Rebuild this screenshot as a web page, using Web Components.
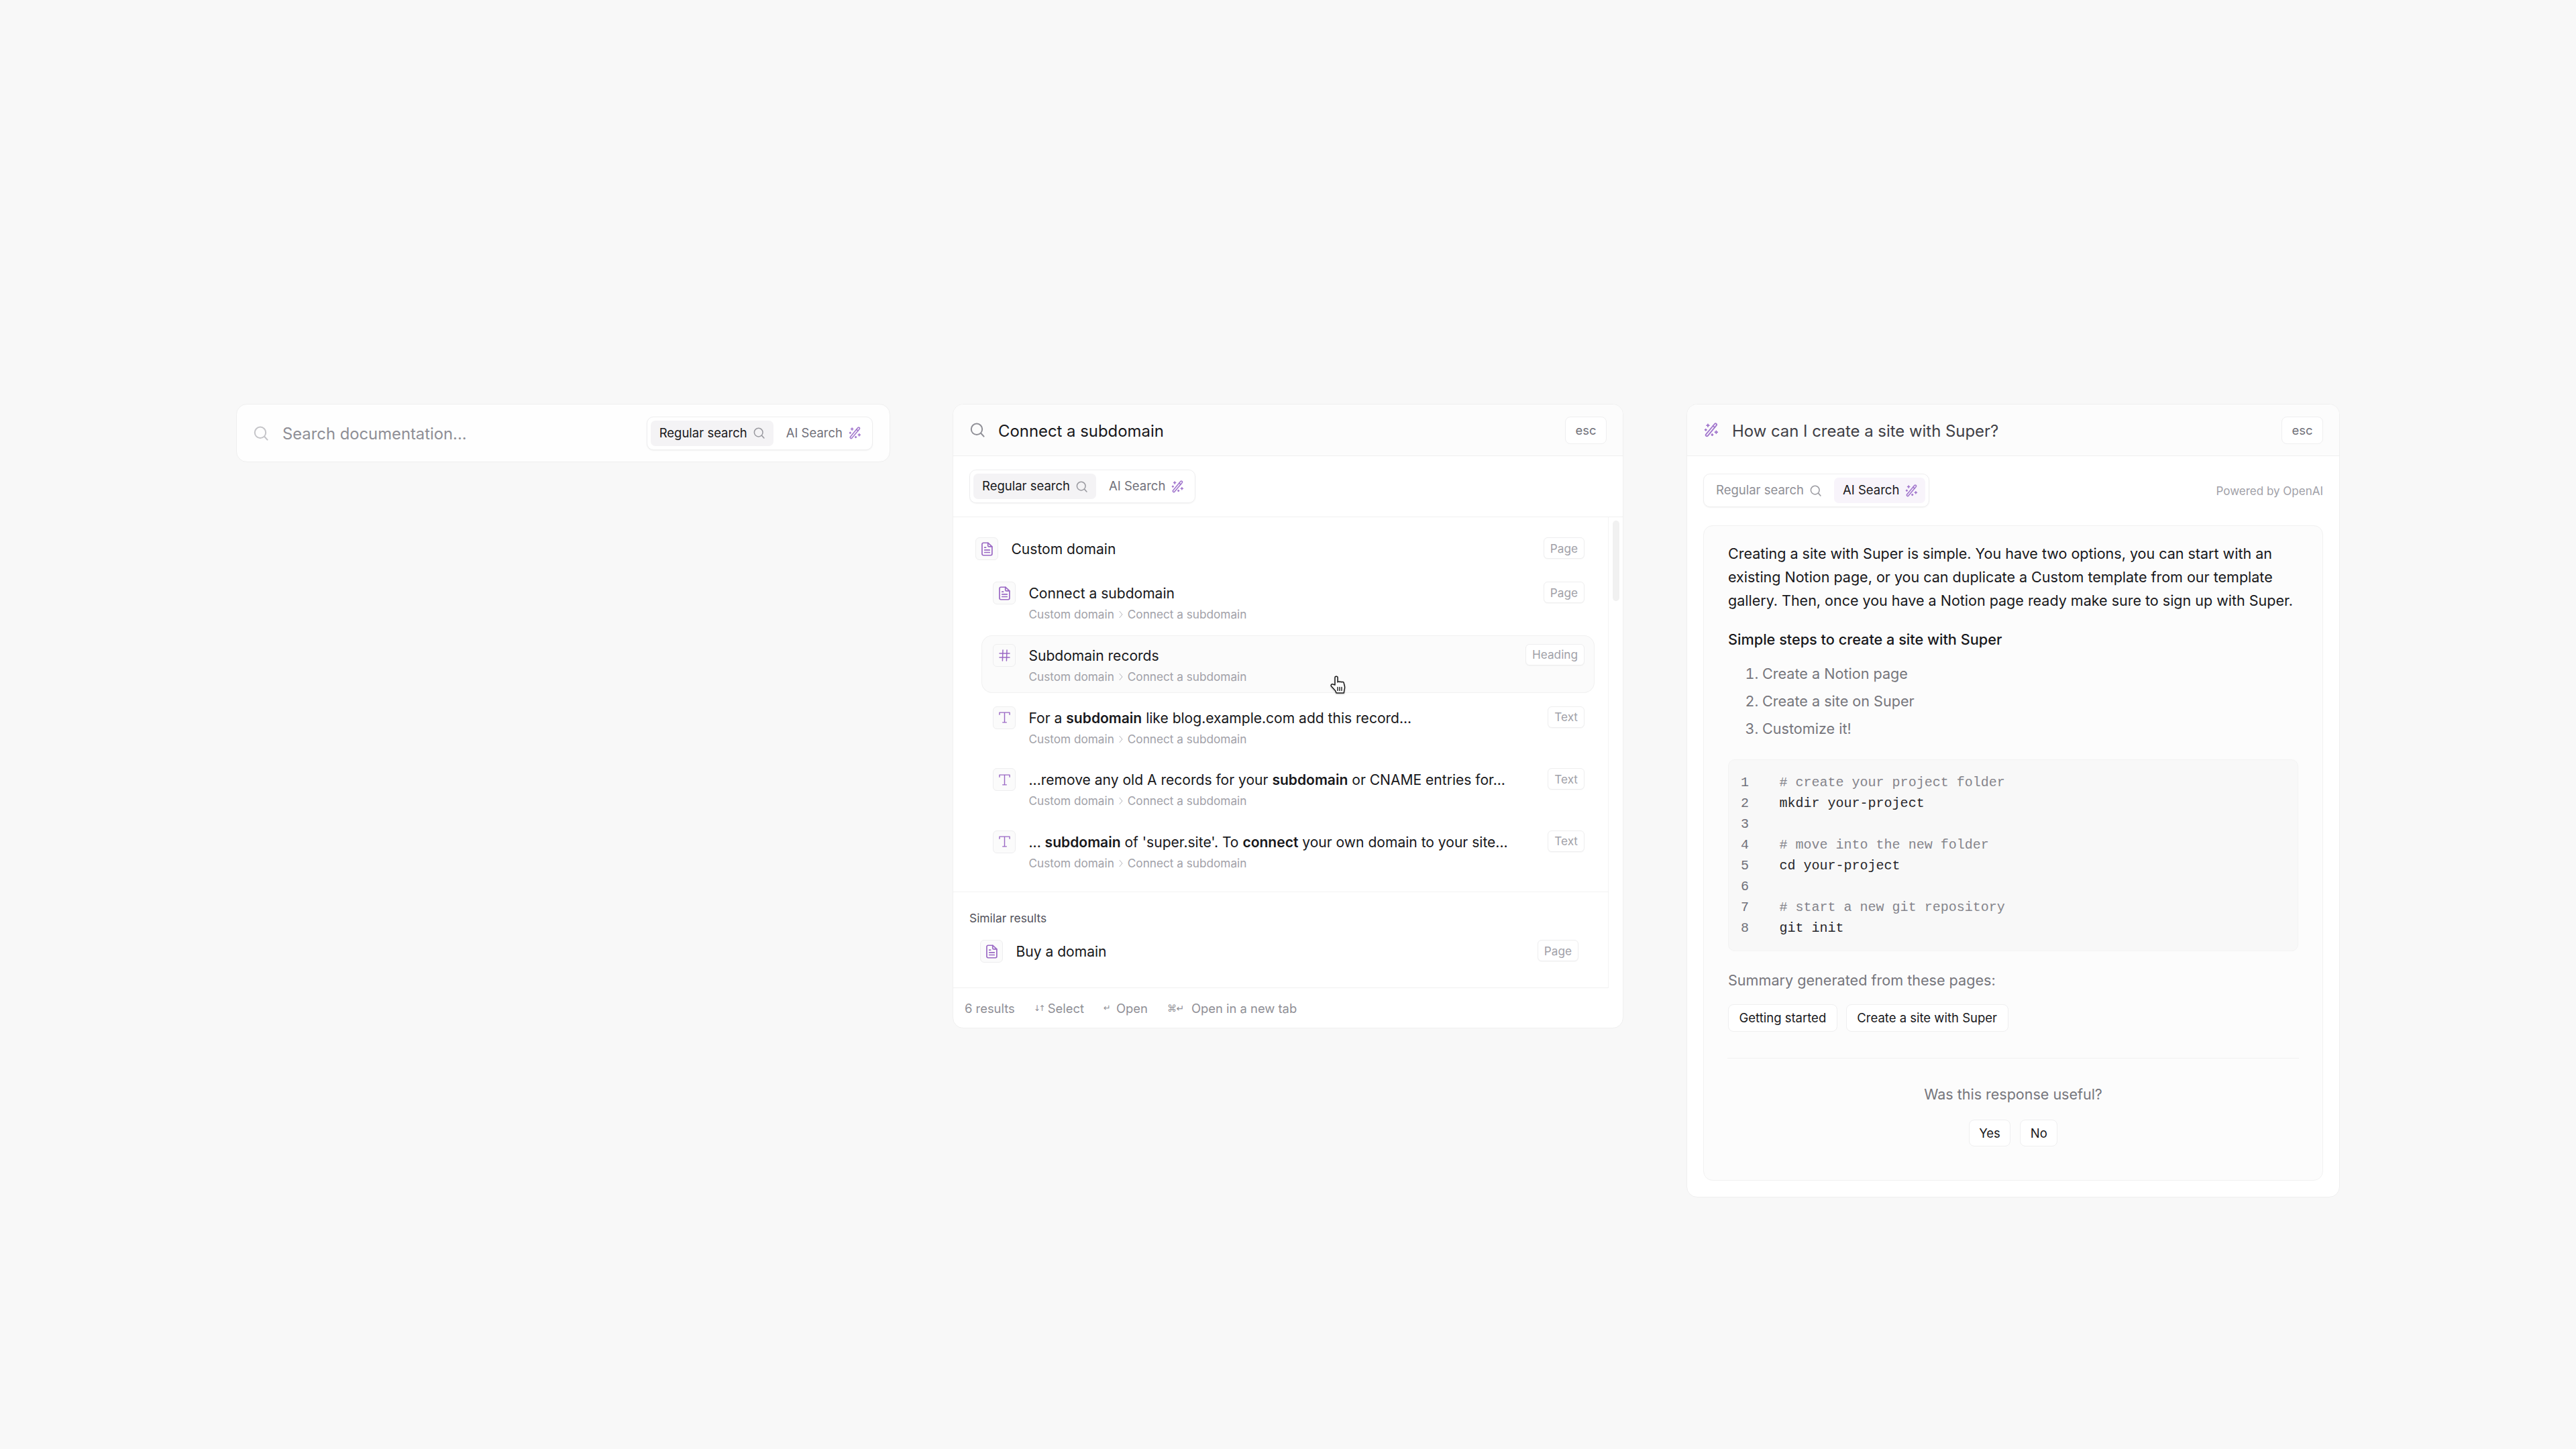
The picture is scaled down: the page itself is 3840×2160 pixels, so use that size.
<!DOCTYPE html>
<html lang="en">
<head>
<meta charset="utf-8">
<title>Super search</title>
<style>
  html, body { margin: 0; background: #f8f8f8; }
  body { font-family: Inter, "Liberation Sans", sans-serif; color: #18181b; min-height: 2160px; }
</style>
</head>
<body>
<search-page>
  <search-closed></search-closed>

  <search-panel>
    <search-header icon="search" slot="header">Connect a subdomain</search-header>
    <div slot="tabs" style="height:90px;display:flex;align-items:center;padding-left:24px;">
      <search-tabs active="regular"></search-tabs>
    </div>
    <result-list>
      <result-row icon="page" tag="Page">Custom domain</result-row>
      <result-row icon="page" tag="Page" crumbs indent>Connect a subdomain</result-row>
      <result-row icon="hash" tag="Heading" crumbs indent hover>Subdomain records</result-row>
      <result-row icon="text" tag="Text" crumbs indent>For a <b>subdomain</b> like blog.example.com add this record...</result-row>
      <result-row icon="text" tag="Text" crumbs indent>...remove any old A records for your <b>subdomain</b> or CNAME entries for...</result-row>
      <result-row icon="text" tag="Text" crumbs indent>... <b>subdomain</b> of 'super.site'. To <b>connect</b> your own domain to your site...</result-row>
    </result-list>
    <similar-results>
      <result-row icon="page" tag="Page">Buy a domain</result-row>
    </similar-results>
    <search-footer></search-footer>
    <hand-cursor></hand-cursor>
  </search-panel>

  <search-panel wide>
    <search-header icon="wand" slot="header">How can I create a site with Super?</search-header>
    <ai-answer>
      <p>Creating a site with Super is simple. You have two options, you can start with an existing Notion page, or you can duplicate a Custom template from our template gallery. Then, once you have a Notion page ready make sure to sign up with Super.</p>
      <h4>Simple steps to create a site with Super</h4>
      <ol>
        <li>Create a Notion page</li>
        <li>Create a site on Super</li>
        <li>Customize it!</li>
      </ol>
    </ai-answer>
  </search-panel>
</search-page>

<script>
// icons used all over the place
const ICONS = {
  search: `<svg viewBox="0 0 22 22" fill="none" stroke="currentColor" stroke-width="2" stroke-linecap="round"><circle cx="10" cy="9.8" r="8.200"/><path d="M16.400 16 20.600 20.600"/></svg>`,
  wand: `<svg viewBox="0 0 24 24" fill="none" stroke="currentColor" stroke-width="2" stroke-linecap="round" stroke-linejoin="round"><path d="M3.200 19.200 17.600 1.900a1.900 1.900 0 0 1 2.900 2.400L6.100 21.600a1.900 1.900 0 0 1-2.900-2.400Z"/><path d="M14.700 5.300 17.700 7.800"/><path d="M6.500 2.500v4M4.500 4.500h4M3 10.500v2.400M1.800 11.700h2.400M20 13.500v4M18 15.500h4M13.500 18.500v2.400M12.300 19.700h2.400"/></svg>`,
  page: `<svg viewBox="0 0 18 22" fill="none" stroke="currentColor" stroke-width="1.800" stroke-linecap="round" stroke-linejoin="round"><path d="M3 1.200h7.500l6.300 6v11.600a2 2 0 0 1-2 2H3a2 2 0 0 1-2-2V3.200a2 2 0 0 1 2-2Z"/><path d="M10.300 1.400v4.300a1.500 1.500 0 0 0 1.500 1.500h4.800"/><path d="M5 8.500h2M5 12.500h8M5 16.300h8"/></svg>`,
  hash: `<svg viewBox="0 0 17 18" fill="none" stroke="currentColor" stroke-width="1.500" stroke-linecap="round"><path d="M1 6h15M1 12h15M6 1 5.400 17M12 1l-.6 16"/></svg>`,
  text: `<svg viewBox="0 0 18 18" fill="none" stroke="currentColor" stroke-width="1.500" stroke-linecap="round" stroke-linejoin="round"><path d="M1 4.500V1.200h16v3.300M9 1.200v15.600M6 16.800h6"/></svg>`
};

class SearchPage extends HTMLElement {
  constructor() {
    super();
    this.attachShadow({ mode: "open" });
    this.shadowRoot.innerHTML = `
      <style>
        :host { display: flex; align-items: flex-start; gap: 93px; padding: 602px 0 0 352px; }
      </style>
      <slot></slot>`;
  }
}

// the little rounded pill with two choices
class SearchTabs extends HTMLElement {
  constructor() {
    super();
    this.attachShadow({ mode: "open" });
    const active = this.getAttribute("active");
    this.shadowRoot.innerHTML = `
      <style>
        :host { display: inline-flex; gap: 6px; padding: 5px; height: 38px; border: 1px solid #eeeeef; border-radius: 10px;
                background: #fff; box-shadow: 0 1px 2px rgba(0,0,0,.05); font-size: 18.5px; color: #71717a; }
        span.tab { display: flex; align-items: center; gap: 9px; padding: 0 13px 2px; border-radius: 7px; white-space: nowrap; }
        span.ai { padding: 0 11px 2px 13px; }
        .on { color: #18181b; }
        .regular.on { background: #f4f3f5; }
        .ai.on { background: #f8f4fb; }
        svg { display: block; margin-top: 2px; }
        .regular svg { width: 17px; height: 17px; color: #9a9aa0; }
        .ai svg { width: 19px; height: 19px; color: #a277cd; }
        .regular:not(.on) { color: #8f8f96; }
      </style>
      <span class="tab regular ${active == "regular" ? "on" : ""}">Regular search ${ICONS.search}</span>
      <span class="tab ai ${active == "ai" ? "on" : ""}">AI Search ${ICONS.wand}</span>`;
  }
}

class SearchClosed extends HTMLElement {
  constructor() {
    super();
    this.attachShadow({ mode: "open" });
    this.shadowRoot.innerHTML = `
      <style>
        :host { display: flex; align-items: center; width: 975px; height: 87px; box-sizing: border-box; padding: 0 25px;
                background: #fefefe; border: 1px solid #efefef; border-radius: 16px; }
        svg { width: 22px; height: 22px; color: #c4c4c8; flex: none; }
        .placeholder { margin-left: 21px; flex: 1; font-size: 23.8px; color: #8f8f96; padding-top: 2px; }
      </style>
      ${ICONS.search}
      <span class="placeholder">Search documentation...</span>
      <search-tabs active="regular"></search-tabs>`;
  }
}

class EscKey extends HTMLElement {
  constructor() {
    super();
    this.attachShadow({ mode: "open" });
    this.shadowRoot.innerHTML = `
      <style>
        :host { display: flex; align-items: center; justify-content: center; width: 62px; height: 41px; box-sizing: border-box;
                border: 1px solid #efeff0; border-radius: 8px; background: #fff; font-size: 18.4px; color: #71717a; }
      </style>
      esc`;
  }
}

class SearchHeader extends HTMLElement {
  constructor() {
    super();
    this.attachShadow({ mode: "open" });
    const wand = this.getAttribute("icon") == "wand";
    this.shadowRoot.innerHTML = `
      <style>
        :host { display: flex; align-items: center; height: 77px; box-sizing: border-box; padding: 0 24px; background: #fcfcfc;
                border-bottom: 1px solid #efefef; font-size: 23.9px; color: ${wand ? "#3f3f46" : "#18181b"}; }
        svg { width: 22px; height: 22px; flex: none; margin-left: 1px; color: ${wand ? "#a277cd" : "#8f8f96"}; }
        .q { flex: 1; margin-left: 20px; padding-top: 2px; }
      </style>
      ${ICONS[this.getAttribute("icon")]}
      <span class="q"><slot></slot></span>
      <esc-key></esc-key>`;
  }
}

class SearchPanel extends HTMLElement {
  constructor() {
    super();
    this.attachShadow({ mode: "open" });
    this.shadowRoot.innerHTML = `
      <style>
        :host { display: block; position: relative; width: 1000px; box-sizing: border-box; background: #fff;
                border: 1px solid #efefef; border-radius: 16px; overflow: hidden; }
        :host([wide]) { width: 974px; margin-left: 1px; }
        .tabs { display: block; border-bottom: 1px solid #f1f1f1; }
        :host([wide]) .tabs { display: none; }
      </style>
      <slot name="header"></slot>
      <div class="tabs"><slot name="tabs"></slot></div>
      <slot></slot>`;
  }
}

class IconBox extends HTMLElement {
  constructor() {
    super();
    this.attachShadow({ mode: "open" });
    const name = this.getAttribute("icon");
    const sizes = { page: [17, 21], hash: [17, 18], text: [17, 17] };
    this.shadowRoot.innerHTML = `
      <style>
        :host { display: flex; align-items: center; justify-content: center; flex: none; width: 34px; height: 34px; box-sizing: border-box;
                border: 1px solid #eeeeef; border-radius: 6px; background: #fbfbfb; color: #9a68c4; }
        svg { display: block; width: ${sizes[name][0]}px; height: ${sizes[name][1]}px; }
      </style>
      ${ICONS[name]}`;
  }
}

class ResultRow extends HTMLElement {
  constructor() {
    super();
    this.attachShadow({ mode: "open" });
    const crumbs = this.hasAttribute("crumbs");
    this.shadowRoot.innerHTML = `
      <style>
        :host { display: flex; gap: 19.5px; box-sizing: border-box; height: 59.5px; padding: 13px 15px 0 16px; border-radius: 16px;
                font-size: 21.05px; color: #18181b; }
        :host([crumbs]) { height: 86px; }
        :host([indent]) { margin-left: 25px; padding-left: 17px; }
        :host([hover]) { background: #fbfbfb; box-shadow: inset 0 0 0 1px #f1f1f1; }
        .body { flex: 1; min-width: 0; }
        .title { line-height: 35px; white-space: nowrap; height: 32px; }
        ::slotted(b) { font-weight: 600; }
        .crumbs { display: flex; align-items: center; gap: 7px; margin-top: 6px; line-height: 22px; font-size: 17.2px; color: #a1a1a8; white-space: nowrap; }
        .crumbs svg { width: 6px; height: 12px; }
        .tag { flex: none; height: 32px; box-sizing: border-box; padding: 0 9px; display: flex; align-items: center; border: 1px solid #eeeeef;
               border-radius: 6px; background: #fff; font-size: 17.2px; color: #a1a1a8; box-shadow: 0 1px 1px rgba(0,0,0,.03); }
      </style>
      <icon-box icon="${this.getAttribute("icon")}"></icon-box>
      <div class="body">
        <div class="title"><slot></slot></div>
        ${crumbs ? `<div class="crumbs"><span>Custom domain</span><svg viewBox="0 0 6 12" fill="none" stroke="#b5b5ba" stroke-width="1"><path d="M.7 1 5 6 .7 11"/></svg><span>Connect a subdomain</span></div>` : ""}
      </div>
      <span class="tag">${this.getAttribute("tag")}</span>`;
  }
}

class ResultList extends HTMLElement {
  constructor() {
    super();
    this.attachShadow({ mode: "open" });
    this.shadowRoot.innerHTML = `
      <style>
        :host { display: flex; flex-direction: column; gap: 6.7px; width: 977px; box-sizing: border-box; height: 559px; padding: 17px 20px 0 17px;
                border-right: 1px solid #f3f3f3; border-bottom: 1px solid #f3f3f3; position: relative; }
        .thumb { position: absolute; left: 983px; top: 5px; width: 10px; height: 120px; border-radius: 5px; background: #f1f1f1; }
      </style>
      <slot></slot>
      <div class="thumb"></div>`;
  }
}

class SimilarResults extends HTMLElement {
  constructor() {
    super();
    this.attachShadow({ mode: "open" });
    this.shadowRoot.innerHTML = `
      <style>
        :host { display: block; width: 977px; height: 143px; box-sizing: border-box; padding: 27px 29px 0 24px; border-right: 1px solid #f3f3f3;
                border-bottom: 1px solid #f1f1f1; }
        .label { font-size: 17.400px; line-height: 24px; color: #52525b; margin-bottom: 7px; }
      </style>
      <div class="label">Similar results</div>
      <slot></slot>`;
  }
}

class SearchFooter extends HTMLElement {
  constructor() {
    super();
    this.attachShadow({ mode: "open" });
    this.shadowRoot.innerHTML = `
      <style>
        :host { display: flex; align-items: center; height: 59px; padding-left: 17px; font-size: 18.4px; color: #8f8f96; white-space: nowrap; }
        .count { margin-right: 28px; }
        .hint { display: flex; align-items: center; margin-right: 29px; }
        .key { font-family: "DejaVu Sans", sans-serif; font-size: 13px; color: #8f8f96; letter-spacing: -1.5px; }
        .k1 { width: 21px; font-size: 12px; letter-spacing: -2.5px; }
        .k2 { width: 19px; }
        .k3 { width: 36px; font-size: 14px; letter-spacing: -.5px; }
      </style>
      <span class="count">6 results</span>
      <span class="hint"><span class="key k1">↓↑</span>Select</span>
      <span class="hint"><span class="key k2">↵</span>Open</span>
      <span class="hint"><span class="key k3">⌘↵</span>Open in a new tab</span>`;
  }
}

class SourceChip extends HTMLElement {
  constructor() {
    super();
    this.attachShadow({ mode: "open" });
    this.shadowRoot.innerHTML = `
      <style>
        :host { display: inline-flex; align-items: center; height: 41px; box-sizing: border-box; padding: 0 14.5px; border: 1px solid #efeff0;
                border-radius: 8px; background: #fff; font-size: 18.5px; color: #18181b; }
      </style>
      <slot></slot>`;
  }
}

class CodeBlock extends HTMLElement {
  constructor() {
    super();
    this.attachShadow({ mode: "open" });
    const lines = ["# create your project folder", "mkdir your-project", "", "# move into the new folder", "cd your-project", "", "# start a new git repository", "git init"];
    this.shadowRoot.innerHTML = `
      <style>
        :host { display: block; padding: 18px; border: 1px solid #f3f3f3; border-radius: 10px; background: #f8f8f8;
                font: 20px/31px "Liberation Mono", monospace; color: #27272a; }
        div { display: flex; height: 31px; white-space: pre; }
        i { font-style: normal; width: 57.6px; color: #71717a; flex: none; }
        .c { color: #85858c; }
      </style>
      ${lines.map((l, n) => `<div><i>${n + 1}</i><span class="${l[0] == "#" ? "c" : ""}">${l}</span></div>`).join("")}`;
  }
}

class AiAnswer extends HTMLElement {
  constructor() {
    super();
    this.attachShadow({ mode: "open" });
    this.shadowRoot.innerHTML = `
      <style>
        :host { display: block; padding: 26px 24px 24px; }
        .top { display: flex; justify-content: space-between; align-items: center; margin-bottom: 27px; }
        .by { font-size: 17px; color: #a1a1a8; padding-top: 2px; }
        .card { box-sizing: border-box; padding: 24px 36px 50px; border: 1px solid #f1f1f1; border-radius: 14px; background: #fcfcfc;
                font-size: 21.5px; line-height: 35px; color: #18181b; }
        ::slotted(p) { margin: 0 0 23px; }
        ::slotted(h4) { margin: 0 0 13px; font-size: 21.7px; font-weight: 500; }
        ::slotted(ol) { margin: 0 0 25px; padding-left: 51px; color: #76767c; line-height: 41px; font-size: 21.6px; }
        .sum { margin: 28px 0 21px; line-height: 30px; color: #76767c; font-size: 21.6px; }
        .chips { display: flex; gap: 13px; }
        .chips source-chip { padding: 0 15.5px; }
        hr { border: 0; border-top: 1px solid #f1f1f1; margin: 39px -1px 38px; }
        .use { text-align: center; line-height: 30px; color: #76767c; }
        .vote { display: flex; justify-content: center; gap: 14px; margin-top: 23px; }
        .vote source-chip { height: 40px; }
      </style>
      <div class="top">
        <search-tabs active="ai"></search-tabs>
        <span class="by">Powered by OpenAI</span>
      </div>
      <div class="card">
        <slot></slot>
        <code-block></code-block>
        <div class="sum">Summary generated from these pages:</div>
        <div class="chips">
          <source-chip>Getting started</source-chip>
          <source-chip>Create a site with Super</source-chip>
        </div>
        <hr>
        <div class="use">Was this response useful?</div>
        <div class="vote">
          <source-chip>Yes</source-chip>
          <source-chip>No</source-chip>
        </div>
      </div>`;
  }
}

// mouse pointer lying over the hovered row
class HandCursor extends HTMLElement {
  constructor() {
    super();
    this.attachShadow({ mode: "open" });
    this.shadowRoot.innerHTML = `
      <style>
        :host { position: absolute; left: 562px; top: 404px; width: 24px; height: 27px; }
        svg { display: block; width: 24px; height: 27px; filter: drop-shadow(0 1px 1px rgba(0,0,0,.25)); }
      </style>
      <svg viewBox="0 0 24 27" fill="#fff" stroke="#1a1a1a" stroke-width="1.500" stroke-linejoin="round" stroke-linecap="round">
        <path d="M7 14V3.200a2 2 0 0 1 4 0V10l.8-.6a2 2 0 0 1 2.700.3 2 2 0 0 1 2.700.2 2 2 0 0 1 2.900.700l1.300 5.400c.4 2 .1 3.500-.4 5l-.7 5H9l-1.300-3.200L1.600 16a2 2 0 0 1 .2-2.600 2 2 0 0 1 2.500-.2Z"/>
        <path d="M11 17.500v5M14 17.500v5M17 17.500v5" stroke-width="1.400"/>
      </svg>`;
  }
}

customElements.define("search-tabs", SearchTabs);
customElements.define("search-closed", SearchClosed);
customElements.define("esc-key", EscKey);
customElements.define("search-header", SearchHeader);
customElements.define("search-panel", SearchPanel);
customElements.define("icon-box", IconBox);
customElements.define("result-row", ResultRow);
customElements.define("result-list", ResultList);
customElements.define("similar-results", SimilarResults);
customElements.define("search-footer", SearchFooter);
customElements.define("source-chip", SourceChip);
customElements.define("code-block", CodeBlock);
customElements.define("ai-answer", AiAnswer);
customElements.define("hand-cursor", HandCursor);
customElements.define("search-page", SearchPage);
</script>
</body>
</html>
